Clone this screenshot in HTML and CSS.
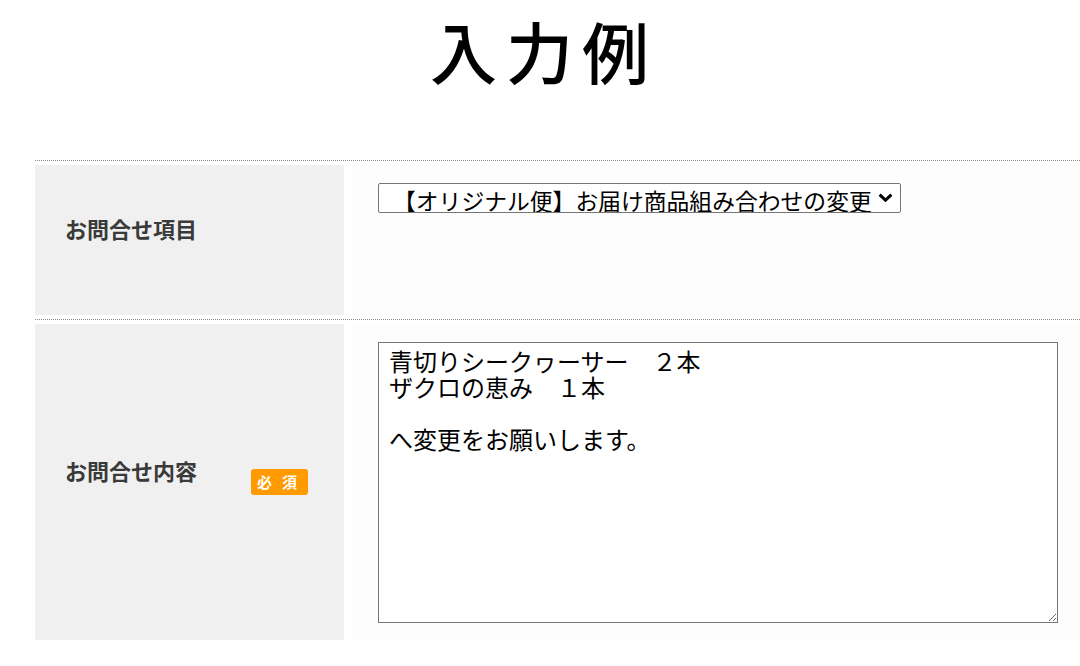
FILE: index.html
```html
<!DOCTYPE html>
<html lang="ja">
<head>
<meta charset="utf-8">
<title>入力例</title>
<link rel="stylesheet" href="styles.css">
</head>
<body>
<h1 class="title">入力例</h1>
<div class="form">
  <div class="row">
    <div class="label label-short"><span class="label-text">お問合せ項目</span></div>
    <div class="value">
      <div class="select-wrap">
        <select class="select"><option>【オリジナル便】お届け商品組み合わせの変更</option></select>
        <svg class="chevron" viewBox="0 0 15 9" aria-hidden="true"><path d="M1.6 1.6 L7.5 7.2 L13.4 1.6" fill="none" stroke="#000" stroke-width="3"/></svg>
      </div>
    </div>
  </div>
  <div class="row">
    <div class="label label-tall"><span class="label-text">お問合せ内容</span><span class="badge">必須</span></div>
    <div class="value">
      <textarea class="textarea">青切りシークヮーサー　２本
ザクロの恵み　１本

へ変更をお願いします。</textarea>
    </div>
  </div>
</div>
</body>
</html>
```
FILE: styles.css
```css
body {
  margin: 0;
  background: #fff;
  font-family: "Noto Sans CJK JP", sans-serif;
}

.title {
  margin: 0 0 77px;
  padding: 16px 0 0 8px;
  font-size: 67px;
  line-height: 67px;
  font-weight: 500;
  letter-spacing: 9px;
  text-align: center;
  color: #000;
}

.form {
  margin-left: 35px;
}

.row {
  display: flex;
  gap: 8px;
  padding: 4px 0;
  border-top: 1px dotted #888;
}

.label {
  width: 309px;
  flex: none;
  box-sizing: border-box;
  display: flex;
  align-items: center;
  justify-content: space-between;
  padding: 0 36px 0 30px;
  background: #f0f0f0;
}

.label-short {
  height: 150px;
}

.label-tall {
  height: 316px;
}

.label-text {
  font-size: 22px;
  line-height: 30px;
  font-weight: 700;
  color: #3a3a3a;
  margin-bottom: 25px;
}

.badge {
  display: block;
  width: 51px;
  height: 26px;
  padding-left: 6px;
  background: #ff9a00;
  color: #fff;
  font-size: 15px;
  line-height: 26px;
  font-weight: 700;
  letter-spacing: 10px;
  border-radius: 3px;
}

.value {
  flex: 1;
  background: #fdfdfd;
  padding: 18px 0 0 26px;
}

.select-wrap {
  position: relative;
  width: 523px;
}

.select {
  appearance: none;
  -webkit-appearance: none;
  display: block;
  margin: 0;
  width: 523px;
  height: 30px;
  box-sizing: border-box;
  border: 1px solid #767676;
  border-radius: 2px;
  background: #fff;
  padding: 0 0 0 14px;
  font-family: "Noto Sans CJK JP", sans-serif;
  font-size: 22.8px;
  color: #000;
}

.chevron {
  position: absolute;
  right: 8px;
  top: 10px;
  width: 15px;
  height: 9px;
  pointer-events: none;
}

.textarea {
  display: block;
  margin: 0;
  width: 680px;
  height: 281px;
  box-sizing: border-box;
  border: 1px solid #767676;
  padding: 5px 10px;
  background: #fff;
  font-family: "Noto Sans CJK JP", sans-serif;
  font-size: 24px;
  line-height: 26px;
  color: #000;
  resize: both;
}
```
